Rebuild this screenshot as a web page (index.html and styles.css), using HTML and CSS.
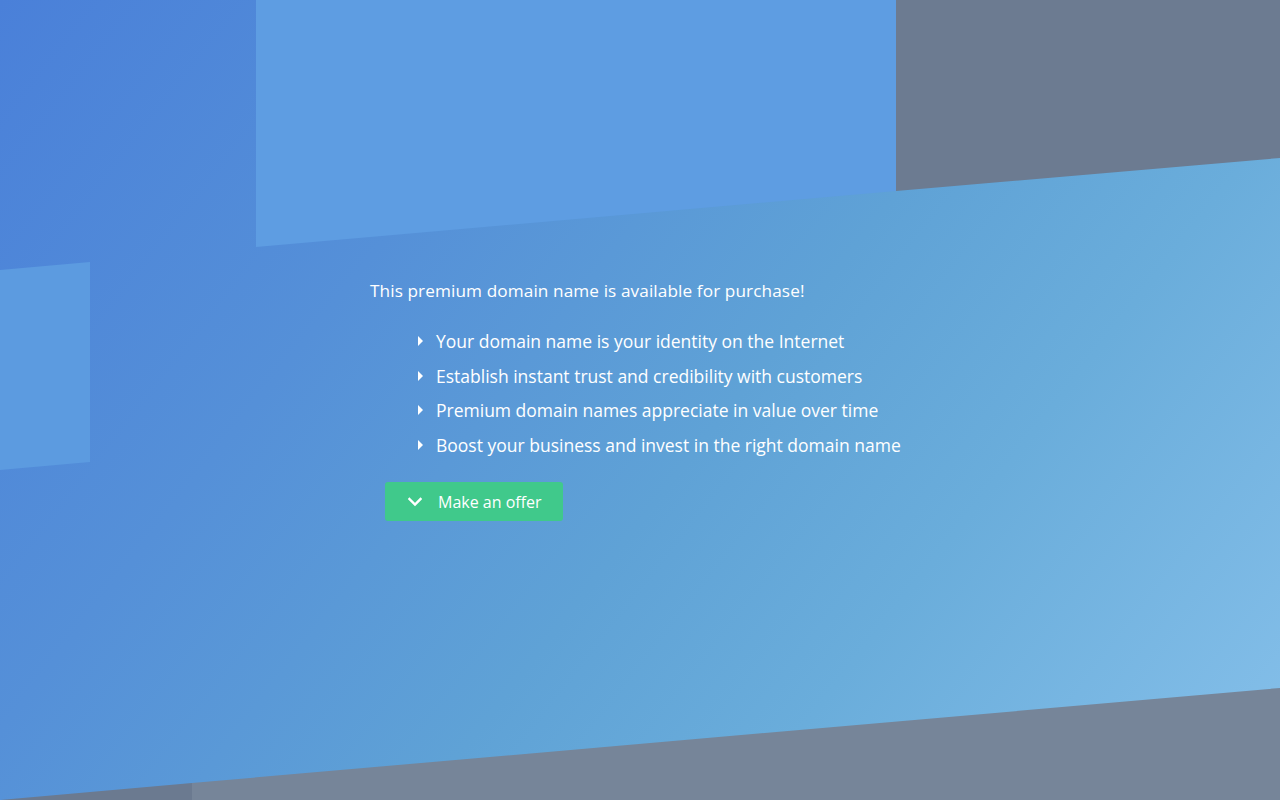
FILE: index.html
```html
<!DOCTYPE html>
<html lang="en">
<head>
<meta charset="utf-8">
<title>Premium domain for sale</title>
<link rel="stylesheet" href="styles.css">
</head>
<body>
<div class="page">
  <div class="backdrop" aria-hidden="true">
    <div class="shape shape-top-light"></div>
    <div class="shape shape-top-gray"></div>
    <div class="shape shape-left-light"></div>
    <div class="shape shape-bottom-gray"></div>
    <div class="shape shape-bottom-gray-dark"></div>
  </div>
  <main class="content">
    <p class="lead">This premium domain name is available for purchase!</p>
    <ul class="benefits">
      <li><span class="tri"></span>Your domain name is your identity on the Internet</li>
      <li><span class="tri"></span>Establish instant trust and credibility with customers</li>
      <li><span class="tri"></span>Premium domain names appreciate in value over time</li>
      <li><span class="tri"></span>Boost your business and invest in the right domain name</li>
    </ul>
    <button class="offer" type="button">
      <svg class="chev" width="14" height="10" viewBox="0 0 14 10"><path d="M1.5 2 L7 7.5 L12.5 2" fill="none" stroke="#fff" stroke-width="2.4" stroke-linecap="square"/></svg>
      <span>Make an offer</span>
    </button>
  </main>
</div>
</body>
</html>
```
FILE: styles.css
```css
* { box-sizing: border-box; }
html, body { margin: 0; padding: 0; }
body {
  font-family: "Open Sans", "Noto Sans", sans-serif;
  color: #fff;
  overflow: hidden;
}
.page {
  position: relative;
  width: 1280px;
  height: 800px;
  background: linear-gradient(128deg, #4a80d9 0%, #5590d8 30%, #5fa2d6 55%, #6aaddb 72%, #86c0ea 100%);
  overflow: hidden;
}
.backdrop { position: absolute; inset: 0; }
.shape { position: absolute; inset: 0; }
.shape-top-light {
  background: #5e9de2;
  clip-path: polygon(256px 0, 896px 0, 896px 191px, 256px 247px);
}
.shape-top-gray {
  background: #6c7b91;
  clip-path: polygon(896px 0, 1280px 0, 1280px 158px, 896px 191px);
}
.shape-left-light {
  background: #5c9be0;
  clip-path: polygon(0 270px, 90px 262px, 90px 462px, 0 470px);
}
.shape-bottom-gray {
  background: #768599;
  clip-path: polygon(192px 783px, 1280px 688px, 1280px 800px, 192px 800px);
}
.shape-bottom-gray-dark {
  background: #6b7a90;
  clip-path: polygon(0 800px, 192px 783px, 192px 800px);
}
.content {
  position: relative;
  width: 560px;
  margin: 0 0 0 370px;
  padding-top: 279px;
}
.lead {
  margin: 0;
  font-size: 17.2px;
  line-height: 24px;
  letter-spacing: 0.1px;
}
.benefits {
  list-style: none;
  margin: 21px 0 0;
  padding: 0 0 0 48px;
}
.benefits li {
  display: flex;
  align-items: center;
  font-size: 17.5px;
  line-height: 24px;
  height: 34.5px;
  white-space: nowrap;
}
.tri {
  width: 0;
  height: 0;
  border-top: 5px solid transparent;
  border-bottom: 5px solid transparent;
  border-left: 5px solid #fff;
  margin-right: 13px;
}
.offer {
  margin: 20px 0 0 15px;
  display: flex;
  align-items: center;
  height: 39px;
  width: 178px;
  padding: 0 0 0 23px;
  border: 0;
  border-radius: 3px;
  background: #40c98b;
  color: #fff;
  font-family: inherit;
  font-size: 16px;
  cursor: pointer;
}
.chev { margin-right: 16px; }
```
